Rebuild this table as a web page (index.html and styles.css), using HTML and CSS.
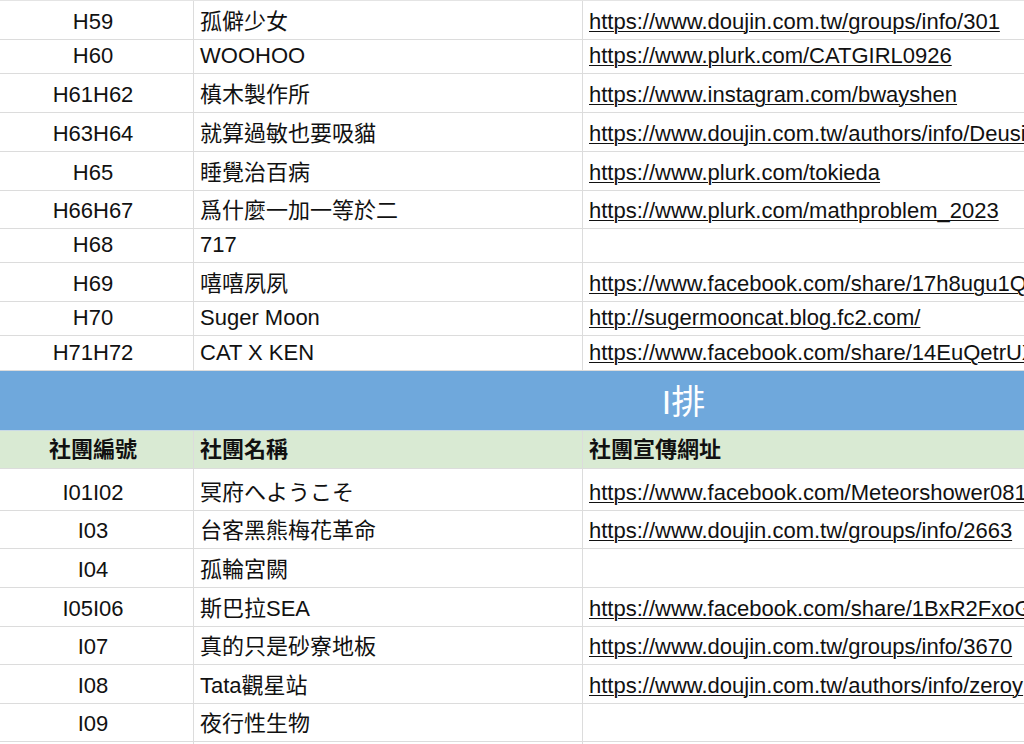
FILE: index.html
```html
<!DOCTYPE html>
<html lang="zh-Hant">
<head>
<meta charset="utf-8">
<title>社團列表</title>
<link rel="stylesheet" href="styles.css">
</head>
<body>
<div class="sheet">
  <div class="row first h40"><div class="c id">H59</div><div class="c name">孤僻少女</div><div class="c url"><span class="link">https://www.doujin.com.tw/groups/info/301</span></div></div>
  <div class="row h34"><div class="c id">H60</div><div class="c name">WOOHOO</div><div class="c url"><span class="link">https://www.plurk.com/CATGIRL0926</span></div></div>
  <div class="row h39"><div class="c id">H61H62</div><div class="c name">槙木製作所</div><div class="c url"><span class="link">https://www.instagram.com/bwayshen</span></div></div>
  <div class="row h39"><div class="c id">H63H64</div><div class="c name">就算過敏也要吸貓</div><div class="c url"><span class="link">https://www.doujin.com.tw/authors/info/Deusi</span></div></div>
  <div class="row h39"><div class="c id">H65</div><div class="c name">睡覺治百病</div><div class="c url"><span class="link">https://www.plurk.com/tokieda</span></div></div>
  <div class="row h38"><div class="c id">H66H67</div><div class="c name">爲什麼一加一等於二</div><div class="c url"><span class="link">https://www.plurk.com/mathproblem_2023</span></div></div>
  <div class="row h34"><div class="c id">H68</div><div class="c name">717</div><div class="c url"></div></div>
  <div class="row h39"><div class="c id">H69</div><div class="c name">嘻嘻夙夙</div><div class="c url"><span class="link">https://www.facebook.com/share/17h8ugu1Q</span></div></div>
  <div class="row h34"><div class="c id">H70</div><div class="c name">Suger Moon</div><div class="c url"><span class="link">http://sugermooncat.blog.fc2.com/</span></div></div>
  <div class="row h35"><div class="c id">H71H72</div><div class="c name">CAT X KEN</div><div class="c url"><span class="link">https://www.facebook.com/share/14EuQetrUX</span></div></div>
  <div class="band">I排</div>
  <div class="row head h38"><div class="c id">社團編號</div><div class="c name">社團名稱</div><div class="c url">社團宣傳網址</div></div>
  <div class="row h42"><div class="c id">I01I02</div><div class="c name">冥府へようこそ</div><div class="c url"><span class="link">https://www.facebook.com/Meteorshower0817</span></div></div>
  <div class="row h38"><div class="c id">I03</div><div class="c name">台客黑熊梅花革命</div><div class="c url"><span class="link">https://www.doujin.com.tw/groups/info/2663</span></div></div>
  <div class="row h39"><div class="c id">I04</div><div class="c name">孤輪宮闕</div><div class="c url"></div></div>
  <div class="row h39"><div class="c id">I05I06</div><div class="c name">斯巴拉SEA</div><div class="c url"><span class="link">https://www.facebook.com/share/1BxR2FxoG</span></div></div>
  <div class="row h38"><div class="c id">I07</div><div class="c name">真的只是砂寮地板</div><div class="c url"><span class="link">https://www.doujin.com.tw/groups/info/3670</span></div></div>
  <div class="row h39"><div class="c id">I08</div><div class="c name">Tata觀星站</div><div class="c url"><span class="link">https://www.doujin.com.tw/authors/info/zeroy</span></div></div>
  <div class="row h38"><div class="c id">I09</div><div class="c name">夜行性生物</div><div class="c url"></div></div>
  <div class="row h38"><div class="c id"></div><div class="c name"></div><div class="c url"></div></div>
</div>
</body>
</html>
```

FILE: styles.css
```css
html, body {
  margin: 0;
  padding: 0;
  background: #ffffff;
  overflow: hidden;
}
body {
  width: 1024px;
  height: 744px;
  font-family: "Liberation Sans", "Noto Sans CJK TC", sans-serif;
  font-size: 22px;
  color: #111111;
}
.sheet {
  display: flex;
  flex-direction: column;
  width: 1374px;
}
.row {
  display: grid;
  grid-template-columns: 194px 389px 1fr;
  box-sizing: border-box;
  border-bottom: 1px solid #dcdcdc;
  flex: none;
}
.row.first { border-top: 1px solid #e4e4e4; }
.h34 { height: 34px; }
.h35 { height: 35px; }
.h38 { height: 38px; }
.h39 { height: 39px; }
.h40 { height: 40px; }
.h42 { height: 42px; }
.c {
  display: flex;
  align-items: flex-end;
  box-sizing: border-box;
  padding-bottom: 5px;
  line-height: 25px;
  white-space: nowrap;
  overflow: visible;
  min-width: 0;
}
.id {
  justify-content: center;
  padding-right: 7px;
  border-right: 1px solid #dcdcdc;
}
.name {
  padding-left: 6px;
  border-right: 1px solid #dcdcdc;
}
.url {
  padding-left: 6px;
}
.link {
  text-decoration: underline;
  text-decoration-thickness: 1px;
  text-underline-offset: 2px;
}
.band {
  box-sizing: border-box;
  height: 60px;
  background: #6fa8dc;
  color: #ffffff;
  font-size: 34px;
  display: flex;
  align-items: center;
  justify-content: center;
  padding-right: 7px;
  padding-bottom: 2px;
  border-bottom: 1px solid #c9d9e6;
  flex: none;
}
.head {
  background: #d9ead3;
  font-weight: 700;
}
.head .c { padding-bottom: 6px; }
```
